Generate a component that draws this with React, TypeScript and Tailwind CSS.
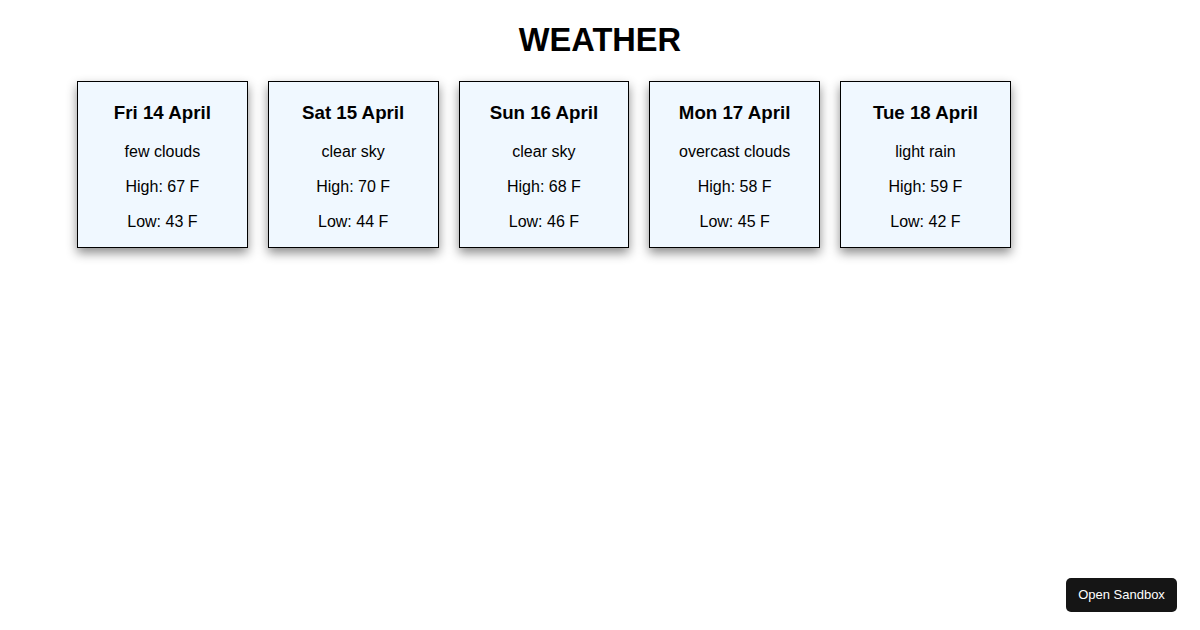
export default function App() {
  const days = [
    { d: "Fri 14 April", c: "few clouds", h: 67, l: 43 },
    { d: "Sat 15 April", c: "clear sky", h: 70, l: 44 },
    { d: "Sun 16 April", c: "clear sky", h: 68, l: 46 },
    { d: "Mon 17 April", c: "overcast clouds", h: 58, l: 45 },
    { d: "Tue 18 April", c: "light rain", h: 59, l: 42 },
  ];
  return (
    <div className="min-h-[630px] bg-white text-black" style={{ fontFamily: '"Liberation Sans", Arial, sans-serif' }}>
      <h1 className="pt-[21.94px] text-center text-[32.6px] font-bold leading-[36.8px]">WEATHER</h1>
      <div className="mt-[22px] flex gap-[20px] pl-[77px]">
        {days.map((x) => (
          <div
            key={x.d}
            className="flex w-[170.75px] flex-col items-center border border-black bg-[#f0f8ff] pt-[20px] pb-[15.5px] shadow-[0_5px_10px_rgba(0,0,0,0.45)]"
          >
            <h3 className="text-[18.72px] font-bold leading-[22px]">{x.d}</h3>
            <p className="mt-[18.5px] text-[16px] leading-[19px]">{x.c}</p>
            <p className="mt-[16px] text-[16px] leading-[19px]">High: {x.h} F</p>
            <p className="mt-[16px] text-[16px] leading-[19px]">Low: {x.l} F</p>
          </div>
        ))}
      </div>
      <button className="fixed right-[23px] bottom-[18px] h-[34px] w-[111px] rounded-[5px] bg-[#151515] text-[13px] text-white">
        Open Sandbox
      </button>
    </div>
  );
}
